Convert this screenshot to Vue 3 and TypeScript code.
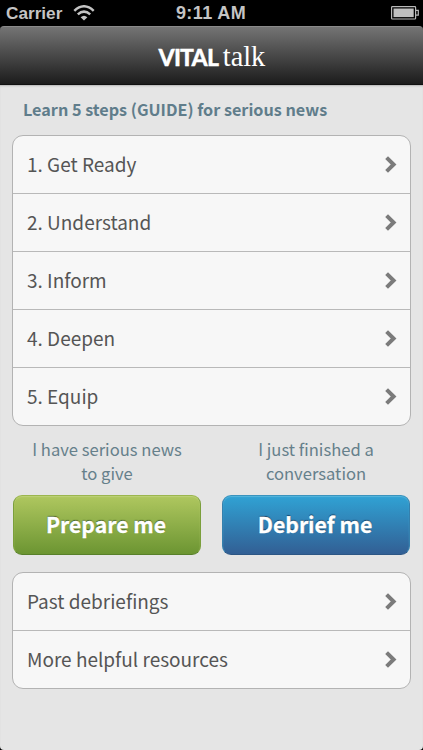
<script setup lang="ts">
interface Choice {
  hint: string[]
  label: string
  tone: 'green' | 'blue'
}

const groups: { steps: string[]; links: string[] } = {
  steps: ['1. Get Ready', '2. Understand', '3. Inform', '4. Deepen', '5. Equip'],
  links: ['Past debriefings', 'More helpful resources'],
}

const choices: Choice[] = [
  { hint: ['I have serious news', 'to give'], label: 'Prepare me', tone: 'green' },
  { hint: ['I just finished a', 'conversation'], label: 'Debrief me', tone: 'blue' },
]
</script>

<template>
  <div class="phone">
    <div class="status">
      <div class="carrier">
        <span>Carrier</span>
        <svg class="wifi" width="22" height="16" viewBox="0 0 22 16">
          <g fill="none" stroke="#c4c4c4" stroke-width="2.5">
            <path d="M1.3 5.8 Q11 -3.2 20.7 5.8" />
            <path d="M4.8 9.4 Q11 3.8 17.2 9.4" />
          </g>
          <path d="M7.6 12.2 Q11 9.2 14.4 12.2 L11 15.6 Z" fill="#c4c4c4" />
        </svg>
      </div>
      <span class="clock">9:11 AM</span>
      <svg class="battery" width="28" height="14" viewBox="0 0 28 14">
        <rect x="0.6" y="0.6" width="24" height="12.4" rx="0.8" fill="none" stroke="#b9b9b9" stroke-width="1.2" />
        <rect x="2.5" y="2.5" width="20.2" height="8.6" fill="#c0c0c0" />
        <path d="M25 4.4 H27.3 V9.2 H25" fill="none" stroke="#b9b9b9" stroke-width="1.2" />
      </svg>
    </div>

    <header class="navbar">
      <svg class="logo" width="112" height="32" viewBox="0 0 112 32">
        <text class="logo-sans" x="2.5" y="26" textLength="60.5" lengthAdjust="spacing">VITAL</text>
        <text class="logo-serif" x="66.8" y="26" textLength="42.5" lengthAdjust="spacingAndGlyphs">talk</text>
      </svg>
    </header>

    <main class="body">
      <h1 class="title">Learn 5 steps (GUIDE) for serious news</h1>

      <ul class="card">
        <li v-for="item in groups.steps" :key="item" class="row">
          <span>{{ item }}</span>
          <svg width="12" height="17" viewBox="0 0 12 17"><path d="M1.6 1.6 L8.6 8.5 L1.6 15.4" /></svg>
        </li>
      </ul>

      <div class="choices">
        <div v-for="choice in choices" :key="choice.label" class="choice">
          <p class="hint">
            <span v-for="line in choice.hint" :key="line">{{ line }}</span>
          </p>
          <button class="button" :class="choice.tone">{{ choice.label }}</button>
        </div>
      </div>

      <ul class="card">
        <li v-for="item in groups.links" :key="item" class="row">
          <span>{{ item }}</span>
          <svg width="12" height="17" viewBox="0 0 12 17"><path d="M1.6 1.6 L8.6 8.5 L1.6 15.4" /></svg>
        </li>
      </ul>
    </main>
  </div>
</template>

<style>
body {
  margin: 0;
  background: #000;
}
</style>

<style scoped>
.phone {
  width: 423px;
  height: 750px;
  overflow: hidden;
  display: flex;
  flex-direction: column;
  background: #000;
  font-family: "Noto Sans CJK SC", "Noto Sans", sans-serif;
}
.status {
  height: 26px;
  box-sizing: border-box;
  padding: 0 4px 0 6px;
  display: grid;
  grid-template-columns: 1fr auto 1fr;
  align-items: center;
  color: #c4c4c4;
  font: bold 17.2px/26px "Liberation Sans", sans-serif;
}
.carrier {
  display: flex;
  align-items: center;
  gap: 11px;
}
.wifi {
  margin-top: 0;
}
.clock {
  font-size: 18px;
  letter-spacing: 0.4px;
  margin-right: 3px;
}
.battery {
  justify-self: end;
}
.navbar {
  height: 59px;
  box-sizing: border-box;
  flex: none;
  display: flex;
  justify-content: center;
  align-items: center;
  border-top: 1px solid #8a8a8a;
  border-bottom: 1px solid #111;
  border-radius: 4px 4px 0 0;
  background: linear-gradient(#747474, #1c1c1c);
}
.logo {
  fill: #fff;
}
.logo-sans {
  font: 900 23px Lato, sans-serif;
  stroke: #fff;
  stroke-width: 0.3px;
}
.logo-serif {
  font: 30px "Liberation Serif", serif;
}
.body {
  flex: 1;
  padding: 0 12px;
  border-radius: 0 0 4px 4px;
  background: #e5e5e5;
  box-shadow: inset 0 2px 2px -1px #b5b5b5;
}
.title {
  margin: 0;
  padding: 11px 0 0 11px;
  height: 39px;
  font-size: 16.2px;
  line-height: 27px;
  font-weight: 700;
  color: #607d8b;
  white-space: nowrap;
}
.card {
  list-style: none;
  margin: 0;
  padding: 0;
  border: 1px solid #b3b3b3;
  border-radius: 11px;
  background: #f7f7f7;
}
.row {
  height: 57px;
  padding: 0 13px 0 14px;
  display: flex;
  align-items: center;
  justify-content: space-between;
  font-size: 19px;
  line-height: 30px;
  color: #555;
  white-space: nowrap;
}
.row + .row {
  border-top: 1px solid #b9b9b9;
}
.row span {
  padding-bottom: 2px;
}
.row path {
  fill: none;
  stroke: #7b7b7b;
  stroke-width: 4;
}
.choices {
  display: grid;
  grid-template-columns: 188px 188px;
  justify-content: space-between;
  padding: 11px 1px 17px;
}
.hint {
  margin: 0 0 10px;
  display: flex;
  flex-direction: column;
  font-size: 16.6px;
  line-height: 24px;
  color: #66808b;
  text-align: center;
  white-space: nowrap;
}
.button {
  display: block;
  width: 188px;
  height: 60px;
  padding: 0 2px 2px 0;
  border: 1px solid;
  border-radius: 9px;
  font: 700 21.2px/56px "Noto Sans CJK SC", sans-serif;
  -webkit-text-stroke: 0.3px #fff;
  color: #fff;
}
.green {
  border-color: #9bb64e #7b9f3c #58802a;
  background: linear-gradient(#afc75f, #6c9532);
  box-shadow: inset 0 1px 1px #bdd078;
  text-shadow: 0 -1px 1px #3e581d;
}
.blue {
  border-color: #3a93bd #3580ad #2c5684;
  background: linear-gradient(#30a2d4, #325f94);
  box-shadow: inset 0 1px 1px #57b5dc;
  text-shadow: 0 -1px 1px #173e60;
}
</style>
